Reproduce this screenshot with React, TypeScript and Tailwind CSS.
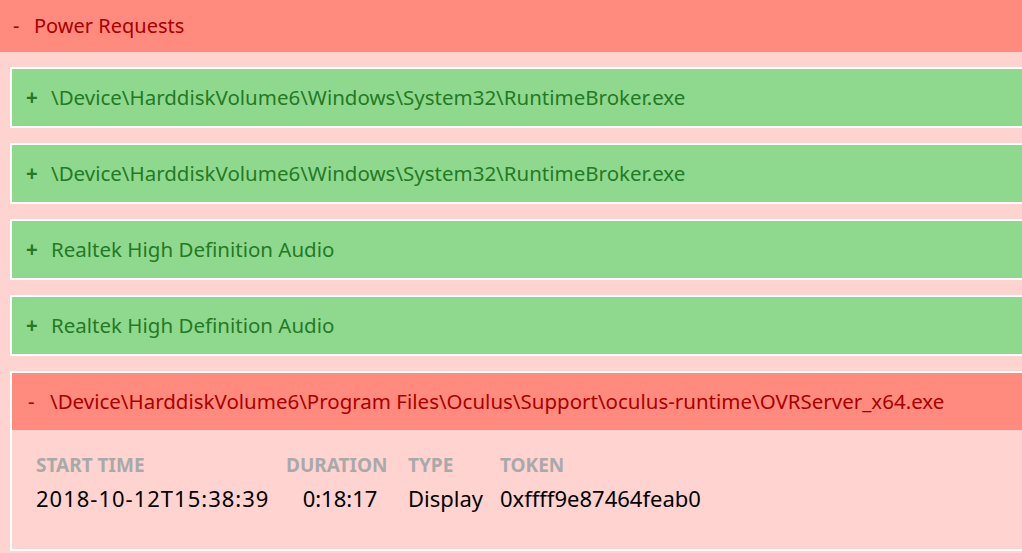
import React from "react";

const font = { fontFamily: '"Segoe UI", "Noto Sans", "Open Sans", sans-serif' };

function Collapsed({ label }: { label: string }) {
  return (
    <div className="flex h-[61px] items-center border-2 border-r-0 border-white bg-[#8fd98e] pl-[14px] text-[20.5px] text-[#247a24]">
      <span className="w-[25px] font-bold">+</span>
      <span>{label}</span>
    </div>
  );
}

export default function App() {
  return (
    <div className="min-h-screen overflow-hidden bg-[#ffd3cf]" style={font}>
      <div className="flex h-[52px] items-center bg-[#ff8b7e] pl-[13px] text-[20px] text-[#a80000]">
        <span className="w-[21px]">-</span>
        <span>Power Requests</span>
      </div>
      <div className="flex flex-col gap-[15px] pl-[10px] pt-[15px]">
        <Collapsed label="\Device\HarddiskVolume6\Windows\System32\RuntimeBroker.exe" />
        <Collapsed label="\Device\HarddiskVolume6\Windows\System32\RuntimeBroker.exe" />
        <Collapsed label="Realtek High Definition Audio" />
        <Collapsed label="Realtek High Definition Audio" />
        <div className="border-2 border-r-0 border-white">
          <div className="flex h-[57px] items-center bg-[#ff8b7e] pl-[16px] text-[20.5px] text-[#a80000]">
            <span className="w-[22px]">-</span>
            <span>\Device\HarddiskVolume6\Program Files\Oculus\Support\oculus-runtime\OVRServer_x64.exe</span>
          </div>
          <div className="h-[119px] pl-[24px] pt-[22px]">
            <table className="border-collapse">
              <thead>
                <tr className="text-left text-[19px] font-bold uppercase leading-[26px] text-[#a9a9a9]">
                  <th className="w-[250px] font-bold">Start Time</th>
                  <th className="w-[122px] font-bold">Duration</th>
                  <th className="w-[92px] font-bold">Type</th>
                  <th className="font-bold">Token</th>
                </tr>
              </thead>
              <tbody>
                <tr className="text-[22px] leading-[30px] text-black">
                  <td className="pt-[5px] tracking-[1px]">2018-10-12T15:38:39</td>
                  <td className="pr-[14px] pt-[5px] text-center">0:18:17</td>
                  <td className="pt-[5px]">Display</td>
                  <td className="pt-[5px]">0xffff9e87464feab0</td>
                </tr>
              </tbody>
            </table>
          </div>
        </div>
      </div>
    </div>
  );
}
